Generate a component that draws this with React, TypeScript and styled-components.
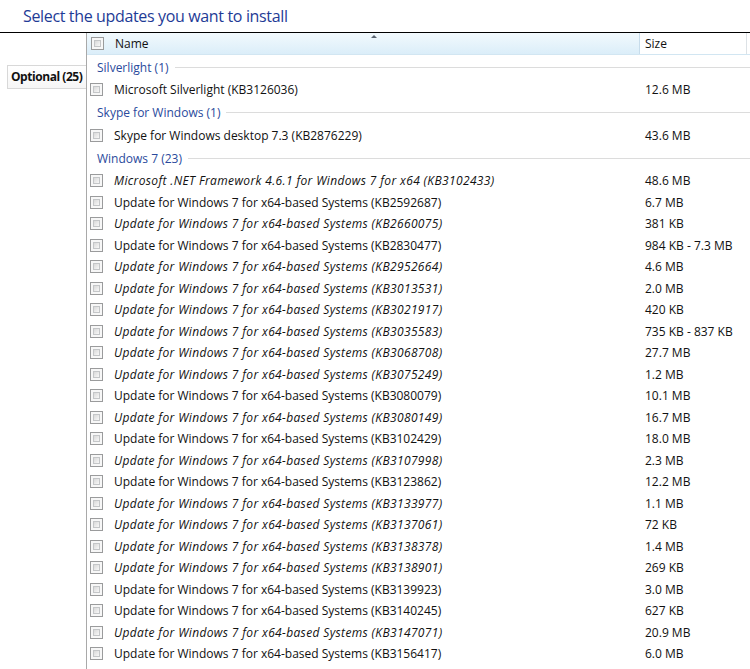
import styled, { createGlobalStyle } from "styled-components";

const GlobalStyle = createGlobalStyle`
body {
    margin:0;
    background:#fff;
    font-family:"Open Sans", "Noto Sans", sans-serif;
    color:#111;
}
`;

const Page = styled.div`
width:750px;
height:669px;
overflow:hidden;
background:#fff;
`;

const Title = styled.h1`
margin:0;
height:32px;
padding-left:23px;
font-weight:400;
font-size:16px;
letter-spacing:-0.35px;
line-height:32px;
color:#1e3b96;
`;

const Frame = styled.div`
display:grid;
grid-template-columns:87px 1fr;
border-top:1px solid #000;
height:636px;
`;

const Sidebar = styled.div`
border-right:1px solid #a9a9a9;
padding-top:32px;
padding-left:7px;
`;

const Tab = styled.div`
height:22px;
border:1px solid #d8d8d8;
border-right:none;
background:linear-gradient(#ffffff, #f6f6f6);
font-weight:700;
font-size:12px;
letter-spacing:-0.45px;
line-height:22px;
padding-left:3px;
white-space:nowrap;
`;

const List = styled.div`
display:flex;
flex-direction:column;
font-size:12px;
`;

const HeaderRow = styled.div`
display:grid;
grid-template-columns:553px 107px 1fr;
height:21px;
border-bottom:1px solid #d2e6f2;
`;

const NameHead = styled.div`
position:relative;
display:flex;
align-items:center;
gap:11px;
padding-left:4px;
background:linear-gradient(#f2f9fd, #dbeef9);
border-right:1px solid #c7dceb;
`;

const SortArrow = styled.span`
position:absolute;
top:2px;
left:284px;
width:0;
height:0;
border-left:3px solid transparent;
border-right:3px solid transparent;
border-bottom:3px solid #5a6470;
`;

const SizeHead = styled.div`
display:flex;
align-items:center;
padding-left:5px;
border-right:1px solid #dde2e6;
`;

const Box = styled.span`
position:relative;
flex:none;
width:13px;
height:13px;
box-sizing:border-box;
border:1px solid #9a9b9c;
background:#f7f7f7;
&::after {
    content:"";
    position:absolute;
    inset:2px;
    border:1px solid #c4c6c8;
    background:linear-gradient(135deg, #d9d9d9, #f8f8f8);
    box-sizing:border-box;
}
`;

const GroupHead = styled.div`
display:flex;
align-items:center;
gap:6px;
height:24px;
padding-left:10px;
color:#2a4a9c;
&::after {
    content:"";
    flex:1;
    height:1px;
    background:#dcdcdc;
}
`;

const ItemRow = styled.div`
display:grid;
grid-template-columns:553px 1fr;
align-items:center;
height:21.5px;
`;

const NameCell = styled.div<{ $italic?: boolean }>`
display:flex;
align-items:center;
gap:11px;
padding-left:3px;
white-space:nowrap;
font-style:${p => (p.$italic ? "italic" : "normal")};
letter-spacing:${p => (p.$italic ? "0.36px" : "0")};
`;

const SizeCell = styled.div`
padding-left:5px;
white-space:nowrap;
`;

type Item = [string, string, boolean?];

const groups: { name: string; items: Item[] }[] = [
    { name: "Silverlight (1)", items: [["Microsoft Silverlight (KB3126036)", "12.6 MB"]] },
    { name: "Skype for Windows (1)", items: [["Skype for Windows desktop 7.3 (KB2876229)", "43.6 MB"]] },
    {
        name: "Windows 7 (23)",
        items: [
            ["Microsoft .NET Framework 4.6.1 for Windows 7 for x64 (KB3102433)", "48.6 MB", true],
            ["KB2592687", "6.7 MB"],
            ["KB2660075", "381 KB", true],
            ["KB2830477", "984 KB - 7.3 MB"],
            ["KB2952664", "4.6 MB", true],
            ["KB3013531", "2.0 MB", true],
            ["KB3021917", "420 KB", true],
            ["KB3035583", "735 KB - 837 KB", true],
            ["KB3068708", "27.7 MB", true],
            ["KB3075249", "1.2 MB", true],
            ["KB3080079", "10.1 MB"],
            ["KB3080149", "16.7 MB", true],
            ["KB3102429", "18.0 MB"],
            ["KB3107998", "2.3 MB", true],
            ["KB3123862", "12.2 MB"],
            ["KB3133977", "1.1 MB", true],
            ["KB3137061", "72 KB", true],
            ["KB3138378", "1.4 MB", true],
            ["KB3138901", "269 KB", true],
            ["KB3139923", "3.0 MB"],
            ["KB3140245", "627 KB"],
            ["KB3147071", "20.9 MB", true],
            ["KB3156417", "6.0 MB"],
        ],
    },
];

const label = (s: string) =>
    s.startsWith("KB") ? `Update for Windows 7 for x64-based Systems (${s})` : s;

export default () => {
    return (
        <Page>
            <GlobalStyle />
            <Title>Select the updates you want to install</Title>
            <Frame>
                <Sidebar>
                    <Tab>Optional (25)</Tab>
                </Sidebar>
                <List>
                    <HeaderRow>
                        <NameHead>
                            <Box />
                            Name
                            <SortArrow />
                        </NameHead>
                        <SizeHead>Size</SizeHead>
                    </HeaderRow>
                    {groups.map(g => (
                        <div key={g.name}>
                            <GroupHead>{g.name}</GroupHead>
                            {g.items.map(([n, size, italic]) => (
                                <ItemRow key={n}>
                                    <NameCell $italic={italic}>
                                        <Box />
                                        {label(n)}
                                    </NameCell>
                                    <SizeCell>{size}</SizeCell>
                                </ItemRow>
                            ))}
                        </div>
                    ))}
                </List>
            </Frame>
        </Page>
    );
};
